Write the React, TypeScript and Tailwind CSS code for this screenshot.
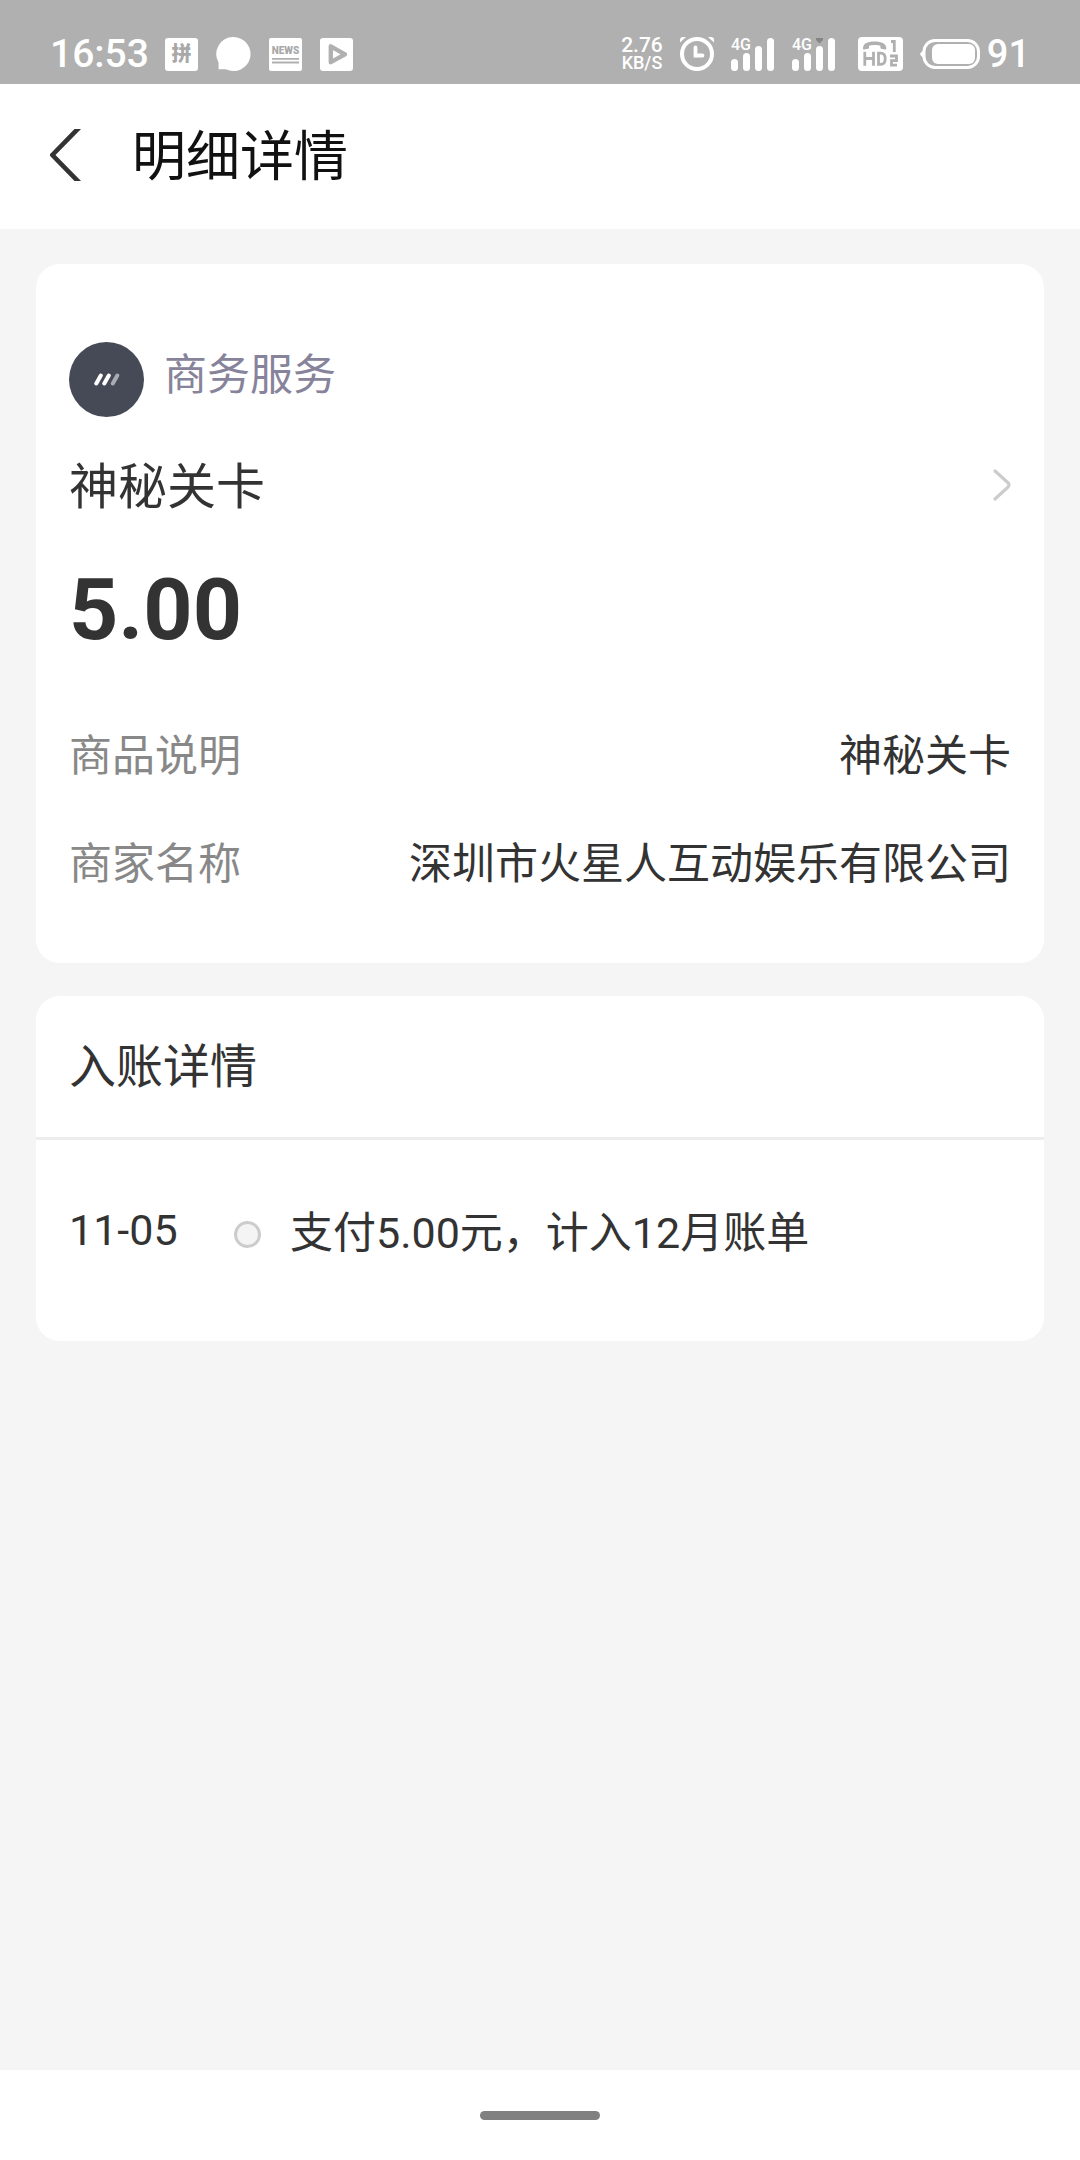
import type { ReactNode } from 'react';

interface DetailItem {
  label: string;
  value: string;
}

interface PostingItem {
  date: string;
  text: string;
}

const details: DetailItem[] = [
  { label: '商品说明', value: '神秘关卡' },
  { label: '商家名称', value: '深圳市火星人互动娱乐有限公司' }
];

const postings: PostingItem[] = [{ date: '11-05', text: '支付5.00元，计入12月账单' }];

function BubbleIcon() {
  return (
    <svg width="35" height="34" viewBox="0 0 35 34" fill="#fff" aria-hidden="true">
      <path d="M17.5 0a17 17 0 1 1-7.6 32.2H2.6V25.5A17 17 0 0 1 17.5 0z" />
    </svg>
  );
}

function NewsIcon() {
  return (
    <svg width="33" height="33" viewBox="0 0 33 33" aria-hidden="true">
      <rect width="33" height="33" rx="2" fill="#fff" />
      <text x="16.5" y="15.5" textAnchor="middle" fontSize="10" fontWeight="900" fill="#a8a8a8">
        NEWS
      </text>
      <path d="M3 20.8h27M3 24.5h27" stroke="#b0b0b0" strokeWidth="1.8" />
    </svg>
  );
}

function PlayIcon() {
  return (
    <svg width="33" height="33" viewBox="0 0 33 33" aria-hidden="true">
      <rect width="33" height="33" rx="3" fill="#fff" />
      <path
        d="M10.8 8.400v15.800L25 16.300z"
        fill="#fff"
        stroke="#b0b0b0"
        strokeWidth="4.4"
        strokeLinejoin="round"
      />
    </svg>
  );
}

function AlarmIcon() {
  return (
    <svg width="34" height="34" viewBox="0 0 34 34" fill="none" stroke="#fff" aria-hidden="true">
      <circle cx="17" cy="17" r="15" strokeWidth="4" />
      <path d="M15.500 10.500v8h7" strokeWidth="3.800" strokeLinecap="round" />
      <path d="M0 5.5V3a3 3 0 0 1 3-3h3zM34 5.5V3a3 3 0 0 0-3-3h-3z" fill="#fff" stroke="none" />
    </svg>
  );
}

function SignalIcon({ receiving = false }: { receiving?: boolean }) {
  return (
    <svg
      width="44"
      height="33"
      viewBox="0 0 44 33"
      fill="#fff"
      className="overflow-visible"
      aria-hidden="true"
    >
      <text x="0" y="12" fontSize="16" fontWeight="500">
        4G
      </text>
      <rect x="0" y="21" width="7" height="12" rx="3.5" />
      <rect x="12" y="15" width="7" height="18" rx="3.5" />
      <rect x="24" y="8" width="7" height="25" rx="3.5" />
      <rect x="36" y="0" width="7" height="33" rx="3.5" />
      {receiving && <path d="M24 0h7v2l-3.5 3.500L24 2z" fill="#858585" />}
    </svg>
  );
}

function HdIcon() {
  return (
    <svg width="45" height="34" viewBox="0 0 45 34" aria-hidden="true">
      <rect width="45" height="34" rx="4" fill="#fff" />
      <path
        d="M5 11.500C4.800 7 9 4.500 16.500 4.500S28.500 7 28.300 11.500a1 1 0 0 1-1.300 1l-3.800-.8a1 1 0 0 1-.8-1.200V8.800C20 7.600 13.500 7.600 11 8.800v1.700a1 1 0 0 1-.8 1.200l-3.900.8a1 1 0 0 1-1.300-1z"
        fill="#b0b0b0"
      />
      <path
        d="M6.800 14.800v14M15.500 14.800v14M6.800 21.500h8.700M20.500 16.200v11.200h2.200c2.800 0 4.500-1.800 4.500-5.600s-1.700-5.600-4.500-5.600zM33 4.500h3.300v10.500M32 19h6.500v4.700H33.500v4.500H39"
        fill="none"
        stroke="#b0b0b0"
        strokeWidth="2.800"
      />
    </svg>
  );
}

function BatteryIcon() {
  return (
    <svg width="60" height="30" viewBox="0 0 60 30" fill="none" aria-hidden="true">
      <rect x="4" y="1.500" width="54.500" height="27" rx="11" stroke="#fff" strokeWidth="3" />
      <path d="M4 10.500L1 13.500a2.200 2.200 0 0 0 0 3.200L4 19.500z" fill="#fff" />
      <rect x="12" y="5" width="43" height="20" rx="6" fill="#fff" />
    </svg>
  );
}

function StatusBar() {
  return (
    <div className="flex h-[84px] items-center justify-between bg-[#b0b0b0] pt-6 pr-[50px] pl-[50px] font-medium text-white">
      <div className="flex items-center gap-4">
        <span className="text-[39px] leading-none">16:53</span>
        <div className="flex items-center gap-[18px]">
          <span className="flex size-[33px] items-center justify-center rounded-[3px] bg-white text-[20px] leading-none font-black text-[#a8a8a8]">
            拼
          </span>
          <BubbleIcon />
          <NewsIcon />
          <PlayIcon />
        </div>
      </div>
      <div className="flex items-center gap-[17px]">
        <div className="text-center leading-[18px]">
          <div className="text-[21px]">2.76</div>
          <div className="text-[18px]">KB/S</div>
        </div>
        <AlarmIcon />
        <SignalIcon />
        <SignalIcon receiving />
        <div className="flex items-center gap-[17px] pl-[5px]">
          <HdIcon />
          <BatteryIcon />
        </div>
        <span className="-ml-[10px] text-[38px] leading-none">91</span>
      </div>
    </div>
  );
}

function Card({ children }: { children: ReactNode }) {
  return <section className="overflow-hidden rounded-[24px] bg-white">{children}</section>;
}

export default function App() {
  return (
    <div className="flex min-h-screen flex-col bg-[#f5f5f5] font-['Roboto','Noto_Sans_CJK_SC',sans-serif] text-[43px] text-[#333]">
      <StatusBar />

      <header className="flex h-[145px] items-center bg-white pl-[50px]">
        <button type="button" aria-label="返回" className="mr-[50px] mb-1">
          <svg width="32" height="52" viewBox="0 0 32 52" fill="#333">
            <path d="M24.500 0H31L5.500 26 31 52h-6.500L0.600 27.500a2 2 0 0 1 0-3z" />
          </svg>
        </button>
        <h1 className="pt-0.5 text-[54px] leading-[72px] text-[#111]">明细详情</h1>
      </header>

      <main className="flex flex-1 flex-col gap-[33px] px-9 pt-[35px]">
        <Card>
          <div className="px-[33px] pt-[78px] pb-[67px]">
            <div className="flex gap-5">
              <span className="flex size-[75px] items-center justify-center rounded-full bg-[#464a56]">
                <svg width="26" height="13" viewBox="0 0 26 13" strokeWidth="4" strokeLinecap="round">
                  <path d="M2.300 10.500L6.800 2.500M10.300 10.500L14.800 2.500" stroke="#fff" />
                  <path d="M18.800 10.500L23.300 2.500" stroke="#a9abb2" />
                </svg>
              </span>
              <span className="leading-[66px] text-[#86839a]">商务服务</span>
            </div>

            <a href="#merchant" className="mt-10 flex items-center justify-between">
              <span className="text-[49px] leading-[62px]">神秘关卡</span>
              <svg width="18" height="32" viewBox="0 0 18 32" fill="none" className="mb-1.5">
                <path
                  d="M2 2L15 13.800a3 3 0 0 1 0 4.400L2 30"
                  stroke="#ccc"
                  strokeWidth="3.200"
                  strokeLinecap="round"
                />
              </svg>
            </a>

            <p className="mt-12 text-[86px] leading-[86px] font-bold">5.00</p>

            <dl className="mt-[71px] flex flex-col gap-11 leading-[64px]">
              {details.map((item) => (
                <div key={item.label} className="flex justify-between">
                  <dt className="text-[#888]">{item.label}</dt>
                  <dd>{item.value}</dd>
                </div>
              ))}
            </dl>
          </div>
        </Card>

        <Card>
          <h2 className="border-b-[3px] border-[#ededed] px-[33px] text-[47px] leading-[141px]">
            入账详情
          </h2>
          <ul className="px-[33px] pt-[60px] pb-[75px]">
            {postings.map((item) => (
              <li key={item.date} className="flex">
                <time className="w-[165px] leading-[60px]">{item.date}</time>
                <span className="mt-[21px] mr-[29px] size-[27px] rounded-full border-3 border-[#ccc] bg-[#f4f4f4]" />
                <span className="leading-[66px]">{item.text}</span>
              </li>
            ))}
          </ul>
        </Card>
      </main>

      <footer className="flex h-[90px] justify-center bg-white pt-[41px]">
        <div className="h-[9px] w-[120px] rounded-full bg-[#808080]" />
      </footer>
    </div>
  );
}
